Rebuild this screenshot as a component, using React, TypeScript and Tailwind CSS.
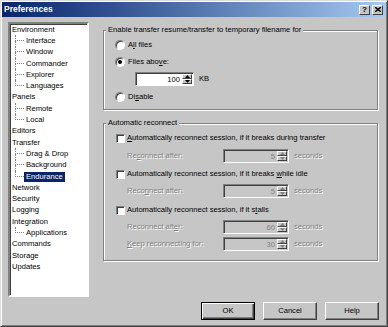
import React from "react";

type Node = { label: string; children?: string[] };

const tree: Node[] = [
  { label: "Environment", children: ["Interface", "Window", "Commander", "Explorer", "Languages"] },
  { label: "Panels", children: ["Remote", "Local"] },
  { label: "Editors" },
  { label: "Transfer", children: ["Drag & Drop", "Background", "Endurance"] },
  { label: "Network" },
  { label: "Security" },
  { label: "Logging" },
  { label: "Integration", children: ["Applications"] },
  { label: "Commands" },
  { label: "Storage" },
  { label: "Updates" },
];

const selected = "Endurance";

const dim = "text-[#808080] [text-shadow:1px_1px_0_#ffffff]";

function TreeRow({ label, child, last }: { label: string; child?: boolean; last?: boolean }) {
  const isSel = label === selected;
  return (
    <div className="flex h-[11.3px] items-center">
      {child && (
        <div className="ml-[5px] flex h-full w-[9px] flex-col">
          <div className="h-1/2 border-b border-l border-dotted border-[#808080]" />
          <div className={`h-1/2 ${last ? "" : "border-l border-dotted border-[#808080]"}`} />
        </div>
      )}
      <span
        className={`px-[2px] leading-[10px] whitespace-nowrap ${
          isSel ? "bg-[#0a246a] text-white" : "text-black"
        }`}
      >
        {label}
      </span>
    </div>
  );
}

function Radio({ checked }: { checked?: boolean }) {
  return (
    <div className="flex h-[10px] w-[10px] items-center justify-center rounded-full border border-t-[#808080] border-l-[#808080] border-r-white border-b-white bg-white shadow-[inset_1px_1px_0_#404040]">
      {checked && <div className="h-[4px] w-[4px] rounded-full bg-black" />}
    </div>
  );
}

function Checkbox() {
  return (
    <div className="h-[9px] w-[9px] border border-t-[#808080] border-l-[#808080] border-r-white border-b-white bg-white shadow-[inset_1px_1px_0_#404040]" />
  );
}

function Arrow({ up, disabled }: { up?: boolean; disabled?: boolean }) {
  return (
    <svg width="5" height="3" viewBox="0 0 5 3">
      <polygon
        points={up ? "2.5,0 5,3 0,3" : "0,0 5,0 2.5,3"}
        fill={disabled ? "#808080" : "#000000"}
      />
    </svg>
  );
}

function Spin({ value, disabled, className }: { value: string; disabled?: boolean; className: string }) {
  return (
    <div
      className={`flex h-[14px] border border-t-[#808080] border-l-[#808080] border-r-white border-b-white shadow-[inset_1px_1px_0_#404040] ${
        disabled ? "bg-[#c6c6c6]" : "bg-white"
      } ${className}`}
    >
      <div className={`flex flex-1 items-center justify-end pr-[2px] pt-[1px] ${disabled ? "text-[#808080]" : "text-black"}`}>
        {value}
      </div>
      <div className="flex w-[11px] flex-col py-[1px] pr-[1px]">
        <div className="flex flex-1 items-center justify-center border border-t-white border-l-white border-r-[#404040] border-b-[#404040] bg-[#c6c6c6]">
          <Arrow up disabled={disabled} />
        </div>
        <div className="flex flex-1 items-center justify-center border border-t-white border-l-white border-r-[#404040] border-b-[#404040] bg-[#c6c6c6]">
          <Arrow disabled={disabled} />
        </div>
      </div>
    </div>
  );
}

function DelayRow({ label, value, className }: { label: React.ReactNode; value: string; className: string }) {
  return (
    <div className={`flex h-[14px] items-center pl-[23px] ${className}`}>
      <span className={`w-[96px] whitespace-nowrap ${dim}`}>{label}</span>
      <Spin value={value} disabled className="w-[66px]" />
      <span className={`ml-[5px] ${dim}`}>seconds</span>
    </div>
  );
}

function CheckRow({ children, className }: { children: React.ReactNode; className: string }) {
  return (
    <div className={`flex h-[12px] items-center gap-[2px] pl-[12px] ${className}`}>
      <Checkbox />
      <span className="whitespace-nowrap">{children}</span>
    </div>
  );
}

function Button({ children, primary }: { children: React.ReactNode; primary?: boolean }) {
  return (
    <button
      className={`flex h-[18px] w-[54px] items-center justify-center bg-[#c6c6c6] text-black ${
        primary
          ? "border border-black shadow-[inset_1px_1px_0_#ffffff,inset_-1px_-1px_0_#404040,inset_-2px_-2px_0_#808080]"
          : "border border-t-white border-l-white border-r-[#404040] border-b-[#404040] shadow-[inset_-1px_-1px_0_#808080]"
      }`}
    >
      {children}
    </button>
  );
}

export default function App() {
  return (
    <div className="h-[327px] w-[388px] border border-t-[#dcdcdc] border-l-[#dcdcdc] border-r-[#404040] border-b-[#404040] bg-[#c6c6c6] p-[1px] font-['Liberation_Sans',Arial,sans-serif] text-[7.6px] text-black shadow-[inset_1px_1px_0_#ffffff,inset_-1px_-1px_0_#808080]">
      <div className="flex h-[15px] items-center bg-gradient-to-r from-[#0a246a] to-[#a6caf0] pl-[2px] pr-[3px]">
        <span className="flex-1 text-[8.5px] font-bold text-white">Preferences</span>
        <div className="flex gap-[2px]">
          <div className="flex h-[10px] w-[11px] items-center justify-center border border-t-white border-l-white border-r-[#404040] border-b-[#404040] bg-[#c6c6c6] text-[8px] leading-none font-bold">
            ?
          </div>
          <div className="flex h-[10px] w-[11px] items-center justify-center border border-t-white border-l-white border-r-[#404040] border-b-[#404040] bg-[#c6c6c6]">
            <svg width="6" height="5" viewBox="0 0 6 5">
              <path d="M0 0L6 5M6 0L0 5" stroke="#000" strokeWidth="1.4" />
            </svg>
          </div>
        </div>
      </div>

      <div className="mt-[5px] flex">
        <div className="ml-[6px] h-[275px] w-[81px] border-2 border-t-[#808080] border-l-[#808080] border-r-white border-b-white bg-white shadow-[inset_1px_1px_0_#404040]">
          {tree.map((n) => (
            <React.Fragment key={n.label}>
              <TreeRow label={n.label} />
              {n.children?.map((c, i) => (
                <TreeRow key={c} label={c} child last={i === n.children!.length - 1} />
              ))}
            </React.Fragment>
          ))}
        </div>

        <div className="ml-[14px] pt-[3px]">
          <fieldset className="w-[275px] border border-[#808080] pb-[6px] shadow-[inset_1px_1px_0_#ffffff,1px_1px_0_#ffffff]">
            <legend className="ml-[2px] bg-[#c6c6c6] px-[2px] leading-[10px]">
              Enable transfer resume/transfer to temporary filename for
            </legend>
            <div className="mt-[4px] flex h-[12px] items-center gap-[3px] pl-[11px]">
              <Radio />
              <span>
                A<u>l</u>l files
              </span>
            </div>
            <div className="mt-[5px] flex h-[12px] items-center gap-[3px] pl-[11px]">
              <Radio checked />
              <span>
                Files abo<u>v</u>e:
              </span>
            </div>
            <div className="mt-[4px] flex h-[14px] items-center pl-[31px]">
              <Spin value="100" className="w-[59px]" />
              <span className="ml-[5px]">KB</span>
            </div>
            <div className="mt-[5px] flex h-[12px] items-center gap-[3px] pl-[11px]">
              <Radio />
              <span>
                Di<u>s</u>able
              </span>
            </div>
          </fieldset>

          <fieldset className="mt-[8px] w-[275px] border border-[#808080] pb-[9px] shadow-[inset_1px_1px_0_#ffffff,1px_1px_0_#ffffff]">
            <legend className="ml-[2px] bg-[#c6c6c6] px-[2px] leading-[10px]">Automatic reconnect</legend>
            <CheckRow className="mt-[4px]">
              <u>A</u>utomatically reconnect session, if it breaks during transfer
            </CheckRow>
            <DelayRow
              className="mt-[5px]"
              value="5"
              label={
                <>
                  Re<u>c</u>onnect after:
                </>
              }
            />
            <CheckRow className="mt-[5px]">
              Automatically reconnect session, if it breaks <u>w</u>hile idle
            </CheckRow>
            <DelayRow
              className="mt-[4px]"
              value="5"
              label={
                <>
                  Reco<u>n</u>nect after:
                </>
              }
            />
            <CheckRow className="mt-[6px]">
              Automatically reconnect session, if it s<u>t</u>alls
            </CheckRow>
            <DelayRow
              className="mt-[4px]"
              value="60"
              label={
                <>
                  Reconnect aft<u>e</u>r:
                </>
              }
            />
            <DelayRow
              className="mt-[3px]"
              value="30"
              label={
                <>
                  <u>K</u>eep reconnecting for:
                </>
              }
            />
          </fieldset>
        </div>
      </div>

      <div className="mt-[5px] flex justify-end gap-[8px] pr-[7px]">
        <Button primary>OK</Button>
        <Button>Cancel</Button>
        <Button>Help</Button>
      </div>
    </div>
  );
}
